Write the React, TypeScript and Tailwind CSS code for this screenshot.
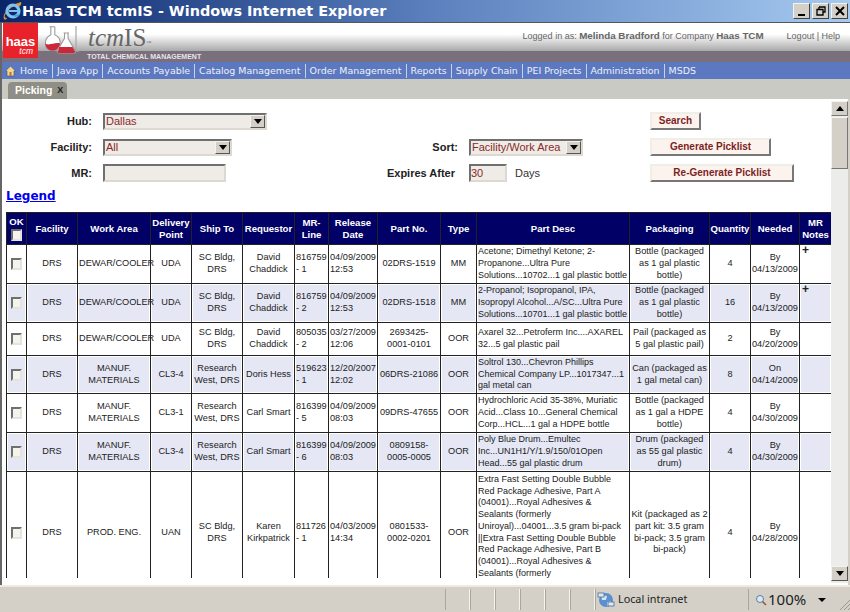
import React from "react";

const navItems = ["Home", "Java App", "Accounts Payable", "Catalog Management", "Order Management", "Reports", "Supply Chain", "PEI Projects", "Administration", "MSDS"];

type Row = { cols: string[]; h: string; plus?: boolean };

const rows: Row[] = [
  { h: "h-[39px]", plus: true, cols: ["DRS", "DEWAR/COOLER", "UDA", "SC Bldg, DRS", "David Chaddick", "816759 - 1", "04/09/2009 12:53", "02DRS-1519", "MM", "Acetone; Dimethyl Ketone; 2-Propanone...Ultra Pure Solutions...10702...1 gal plastic bottle", "Bottle (packaged as 1 gal plastic bottle)", "4", "By 04/13/2009"] },
  { h: "h-[39px]", plus: true, cols: ["DRS", "DEWAR/COOLER", "UDA", "SC Bldg, DRS", "David Chaddick", "816759 - 2", "04/09/2009 12:53", "02DRS-1518", "MM", "2-Propanol; Isopropanol, IPA, Isopropyl Alcohol...A/SC...Ultra Pure Solutions...10701...1 gal plastic bottle", "Bottle (packaged as 1 gal plastic bottle)", "16", "By 04/13/2009"] },
  { h: "h-[33px]", cols: ["DRS", "DEWAR/COOLER", "UDA", "SC Bldg, DRS", "David Chaddick", "805035 - 2", "03/27/2009 12:06", "2693425-0001-0101", "OOR", "Axarel 32...Petroferm Inc....AXAREL 32...5 gal plastic pail", "Pail (packaged as 5 gal plastic pail)", "2", "By 04/20/2009"] },
  { h: "h-[38px]", cols: ["DRS", "MANUF. MATERIALS", "CL3-4", "Research West, DRS", "Doris Hess", "519623 - 1", "12/20/2007 12:02", "06DRS-21086", "OOR", "Soltrol 130...Chevron Phillips Chemical Company LP...1017347...1 gal metal can", "Can (packaged as 1 gal metal can)", "8", "On 04/14/2009"] },
  { h: "h-[39px]", cols: ["DRS", "MANUF. MATERIALS", "CL3-1", "Research West, DRS", "Carl Smart", "816399 - 5", "04/09/2009 08:03", "09DRS-47655", "OOR", "Hydrochloric Acid 35-38%, Muriatic Acid...Class 10...General Chemical Corp...HCL...1 gal a HDPE bottle", "Bottle (packaged as 1 gal a HDPE bottle)", "4", "By 04/30/2009"] },
  { h: "h-[39px]", cols: ["DRS", "MANUF. MATERIALS", "CL3-4", "Research West, DRS", "Carl Smart", "816399 - 6", "04/09/2009 08:03", "0809158-0005-0005", "OOR", "Poly Blue Drum...Emultec Inc...UN1H1/Y/1.9/150/01Open Head...55 gal plastic drum", "Drum (packaged as 55 gal plastic drum)", "4", "By 04/30/2009"] },
  { h: "h-[122px]", cols: ["DRS", "PROD. ENG.", "UAN", "SC Bldg, DRS", "Karen Kirkpatrick", "811726 - 1", "04/03/2009 14:34", "0801533-0002-0201", "OOR", "Extra Fast Setting Double Bubble Red Package Adhesive, Part A (04001)...Royal Adhesives & Sealants (formerly Uniroyal)...04001...3.5 gram bi-pack ||Extra Fast Setting Double Bubble Red Package Adhesive, Part B (04001)...Royal Adhesives & Sealants (formerly Uniroyal)...04001...3.5 gram bi-pack", "Kit (packaged as 2 part kit: 3.5 gram bi-pack; 3.5 gram bi-pack)", "4", "By 04/28/2009"] },
];

const headers = ["Facility", "Work Area", "Delivery Point", "Ship To", "Requestor", "MR-Line", "Release Date", "Part No.", "Type", "Part Desc", "Packaging", "Quantity", "Needed", "MR Notes"];
const widths = ["w-[20px]", "w-[51px]", "w-[73px]", "w-[41px]", "w-[51px]", "w-[52px]", "w-[34px]", "w-[49px]", "w-[63px]", "w-[36px]", "w-[153px]", "w-[80px]", "w-[41px]", "w-[49px]", "w-[32px]"];
const leftCols = new Set([5, 6, 9]);

function Check() {
  return <input type="checkbox" readOnly className="appearance-none block mx-auto w-[11px] h-[12px] bg-[#f4f3ee] border-2 border-t-[#6f6f6f] border-l-[#6f6f6f] border-r-[#e4e3dc] border-b-[#e4e3dc]" />;
}

function Arrow() {
  return <span className="w-0 h-0 border-x-[4px] border-x-transparent border-t-[5px] border-t-black" />;
}

function SelectBox({ value, width }: { value: string; width: string }) {
  return (
    <div className={`${width} h-[17px] flex items-center justify-between bg-[#efebe6] border-2 border-t-[#6f6f6f] border-l-[#6f6f6f] border-r-[#ddd9d0] border-b-[#ddd9d0] text-[#8a2a2a] font-normal text-[11px] pl-[1px] leading-none whitespace-nowrap`}>
      <span>{value}</span>
      <span className="w-[15px] h-[13px] shrink-0 bg-[#d4d0c8] border border-t-[#f4f3ee] border-l-[#f4f3ee] border-r-[#555] border-b-[#555] flex items-center justify-center"><Arrow /></span>
    </div>
  );
}

function Btn({ label, width }: { label: string; width: string }) {
  return (
    <button className={`${width} h-[18px] bg-[#fcf3ee] border-2 border-t-[#efefe8] border-l-[#efefe8] border-r-[#777] border-b-[#777] text-[#7d1f1f] font-bold text-[10px] leading-none`}>
      {label}
    </button>
  );
}

function IeLogo() {
  return (
    <svg width="21" height="20" viewBox="0 0 21 20" className="shrink-0">
      <path d="M2 18 C0 14 6 4 19 1 C20 3 18 5 17 6 C13 3 6 8 3 14 C2 16 3 17 5 17 C4 19 3 19 2 18Z" fill="#d99a2b" />
      <circle cx="11" cy="10" r="6" fill="none" stroke="#7ec0ee" strokeWidth="3.2" />
      <rect x="7" y="9" width="9" height="2" fill="#7ec0ee" />
      <path d="M12 14 L18 13 L17 15 L13 16Z" fill="#4a9ad8" />
    </svg>
  );
}

function Flasks() {
  return (
    <svg width="42" height="30" viewBox="0 0 42 34" className="shrink-0">
      <path d="M8 2 L14 2 M9.5 2 L9.5 11 C1 15 1 28 11 29 C22 29 23 15 14 11 L14 2" fill="#fff" stroke="#9a9a9a" strokeWidth="1.2" />
      <path d="M3 21 C8 24 14 19 20 21 C19 27 15 29 11 29 C7 29 4 26 3 21Z" fill="#c8283a" />
      <path d="M24 9 L30 9 M25 9 L25 15 L17 29 C16 31 18 32 20 32 L35 32 C38 32 38 30 37 29 L29 15 L29 9" fill="#fff" stroke="#9a9a9a" strokeWidth="1.2" />
      <path d="M19 25 L34 25 L37 30 C37 31 36 32 35 32 L19 32 C17 32 17 30 18 29Z" fill="#c8283a" />
      <path d="M38 1 L38 29 L41 30" fill="none" stroke="#a8a8a8" strokeWidth="1.4" />
    </svg>
  );
}

function Globe() {
  return (
    <svg width="18" height="17" viewBox="0 0 18 17" className="shrink-0">
      <circle cx="9" cy="9" r="7" fill="#5b8fd0" />
      <path d="M4 4 L10 5 L9 9 L5 9Z M10 11 L14 10 L13 14 L10 15Z" fill="#d8e4f0" />
      <rect x="1" y="2" width="6" height="4" fill="#dfe7ef" stroke="#35618f" strokeWidth="0.7" />
      <rect x="11" y="11" width="6" height="4" fill="#dfe7ef" stroke="#35618f" strokeWidth="0.7" />
    </svg>
  );
}

export default function App() {
  return (
    <div className="w-[850px] h-[612px] overflow-hidden flex flex-col bg-[#d4d0c8] font-['Liberation_Sans',Arial,sans-serif]">
      {/* Title bar */}
      <div className="h-[22px] shrink-0 flex items-center bg-gradient-to-r from-[#0a246a] via-[#5a7fbc] to-[#a6caf0] pl-[2px] pr-[2px]">
        <IeLogo />
        <span className="ml-[-1px] text-white font-bold text-[14.4px] font-['DejaVu_Sans',sans-serif] whitespace-nowrap leading-none">Haas TCM tcmIS - Windows Internet Explorer</span>
        <div className="ml-auto flex gap-[2px]">
          {[
            <span key="a" className="block w-[7px] h-[2px] bg-black mt-[8px]" />,
            <svg key="b" width="10" height="10" viewBox="0 0 10 10"><path d="M3 1H9V6H7M3 1V3M1 3.5H7V9H1Z" fill="none" stroke="#000" strokeWidth="1.3" /></svg>,
            <svg key="c" width="10" height="10" viewBox="0 0 10 10"><path d="M1 1L9 9M9 1L1 9" stroke="#000" strokeWidth="2" /></svg>,
          ].map((ic, i) => (
            <span key={i} className="w-[17px] h-[16px] bg-[#d4d0c8] border border-t-[#f4f3ee] border-l-[#f4f3ee] border-r-[#404040] border-b-[#404040] flex items-center justify-center">{ic}</span>
          ))}
        </div>
      </div>

      <div className="flex-1 min-h-0 flex flex-col border-l-2 border-l-[#666] border-t border-t-[#555] bg-white">
        {/* Header */}
        <div className="h-[39px] shrink-0 flex flex-col">
          <div className="h-[28px] flex bg-gradient-to-b from-white from-40% to-[#a9a9a9]">
            <div className="flex-1 flex items-start">
              <div className="w-[35px] h-[35px] ml-[1px] bg-[#e8222a] flex flex-col items-center justify-end pb-[2px] text-white relative z-10">
                <span className="font-bold text-[13px] leading-[11px]">haas</span>
                <span className="italic text-[8.5px] leading-[9px] self-end pr-[5px]">tcm</span>
              </div>
              <div className="ml-[2px] mt-[2px] relative z-10"><Flasks /></div>
              <div className="ml-[6px] mt-[3px]">
                <span className="font-['Liberation_Serif',serif] text-[#666] text-[25px] leading-[24px] whitespace-nowrap"><i>tcm</i>IS<sup className="text-[5px]">™</sup></span>
              </div>
            </div>
            <div className="flex items-center h-[27px] pr-[10px] text-[#666] text-[9px] whitespace-nowrap">
              <span>Logged in as: <b className="text-[9.8px]">Melinda Bradford</b> for Company <b className="text-[9.8px]">Haas TCM</b></span>
              <span className="ml-[23px]">Logout | Help</span>
            </div>
          </div>
          <div className="h-[11px] bg-[#7a6f7d] pl-[85px] flex items-center">
            <span className="text-[#e8e4e8] text-[7px] font-bold leading-none whitespace-nowrap">TOTAL CHEMICAL MANAGEMENT</span>
          </div>
        </div>

        {/* Nav */}
        <nav className="h-[17px] shrink-0 bg-[#5b78c0] flex items-center pl-[3px] text-[#eef1f8] text-[9.45px] font-['DejaVu_Sans',sans-serif] whitespace-nowrap">
          <svg width="11" height="12" viewBox="0 0 11 12" className="shrink-0"><path d="M5.5 1L0.5 6H2V11H9V6H10.5Z" fill="#f2d58a" stroke="#33558f" strokeWidth="0.6" /><rect x="4.5" y="7" width="2" height="4" fill="#c46a3a" /></svg>
          {navItems.map((n, i) => (
            <span key={n} className={`px-[4px] h-[14px] leading-[14px] ${i < navItems.length - 1 ? "border-r border-r-[#c6d2ea]" : ""}`}>{n}</span>
          ))}
        </nav>

        {/* Tabs */}
        <div className="h-[20px] shrink-0 bg-[#c9cac3] flex items-end pl-[6px]">
          <div className="h-[17px] w-[59px] bg-[#8f8f85] rounded-t-[4px] flex items-center pl-[7px] gap-[5px] text-[10.5px] leading-none">
            <span className="text-white font-bold">Picking</span>
            <span className="text-[#1a1a1a] font-bold text-[9px]">X</span>
          </div>
        </div>

        {/* Main */}
        <div className="flex-1 min-h-0 flex bg-white">
          <div className="w-[829px] shrink-0 overflow-hidden flex flex-col h-[482px]">
            <div className="grid grid-cols-[90px_270px_74px_170px_auto] gap-x-[11px] grid-rows-[26px_26px_26px] pt-[9px] text-[11px] font-bold text-[#222] items-center shrink-0">
              <span className="text-right">Hub:</span>
              <SelectBox value="Dallas" width="w-[164px]" />
              <span />
              <span />
              <Btn label="Search" width="w-[51px]" />

              <span className="text-right">Facility:</span>
              <SelectBox value="All" width="w-[129px]" />
              <span className="text-right">Sort:</span>
              <SelectBox value="Facility/Work Area" width="w-[114px]" />
              <Btn label="Generate Picklist" width="w-[121px]" />

              <span className="text-right">MR:</span>
              <div className="w-[123px] h-[18px] bg-[#efebe6] border-2 border-t-[#6f6f6f] border-l-[#6f6f6f] border-r-[#ddd9d0] border-b-[#ddd9d0]" />
              <span className="whitespace-nowrap flex justify-end pr-[3px]">Expires After</span>
              <div className="flex items-center font-normal">
                <div className="w-[38px] h-[18px] bg-[#efebe6] border-2 border-t-[#6f6f6f] border-l-[#6f6f6f] border-r-[#ddd9d0] border-b-[#ddd9d0] text-[#8a2a2a] text-[11px] leading-[14px]">30</div>
                <span className="ml-[8px] text-[11px] text-[#333]">Days</span>
              </div>
              <Btn label="Re-Generate Picklist" width="w-[144px]" />
            </div>

            <div className="mt-[1px] ml-[4px] shrink-0 h-[18px] flex items-center">
              <a href="#" onClick={(e) => e.preventDefault()} className="text-[#0000ee] underline font-bold text-[12px] leading-[16px] font-['DejaVu_Sans',sans-serif]">Legend</a>
            </div>

            <div className="mt-[7px] ml-[4px] shrink-0 h-[366px] overflow-hidden">
              <table className="table-fixed border-collapse w-[825px] text-[9.2px] leading-[11.7px] text-[#222]">
                <colgroup>
                  {widths.map((w, i) => <col key={i} className={w} />)}
                </colgroup>
                <thead>
                  <tr className="h-[32px] bg-[#000066] text-white text-[9.6px]">
                    <th className="border border-[#222] p-0 font-bold align-middle">
                      <div className="flex flex-col items-center gap-[2px]"><span>OK</span><Check /></div>
                    </th>
                    {headers.map((h) => (
                      <th key={h} className="border border-[#222] p-0 font-bold align-middle">{h}</th>
                    ))}
                  </tr>
                </thead>
                <tbody>
                  {rows.map((r, i) => {
                    const altClass = i === 1 || i === 3 || i === 5 ? "bg-[#e5e7f5] shadow-[inset_0_0_0_1px_#fff]" : "bg-white";
                    return (
                      <tr key={i} className={r.h}>
                        <td className={`border border-[#222] p-0 align-middle ${altClass}`}><Check /></td>
                        {r.cols.map((c, j) => (
                          <td key={j} className={`border border-[#222] py-0 px-[1px] align-middle ${altClass} ${leftCols.has(j) ? "text-left" : "text-center"} ${j === 9 ? "text-[9px]" : ""}`}>{c}</td>
                        ))}
                        <td className={`border border-[#222] py-0 px-[2px] align-top text-left font-bold text-[12px] ${altClass}`}>{r.plus ? "+" : ""}</td>
                      </tr>
                    );
                  })}
                </tbody>
              </table>
            </div>
          </div>

          {/* Scrollbar */}
          <div className="w-[17px] shrink-0 h-[482px] mt-[2px] bg-[#ececea] flex flex-col">
            <span className="h-[15px] shrink-0 bg-[#d4d0c8] border border-t-[#f4f3ee] border-l-[#f4f3ee] border-r-[#777] border-b-[#777] flex items-center justify-center">
              <span className="w-0 h-0 border-x-[4px] border-x-transparent border-b-[5px] border-b-black" />
            </span>
            <span className="h-[52px] shrink-0 mt-[1px] bg-[#d4d0c8] border border-t-[#f4f3ee] border-l-[#f4f3ee] border-r-[#777] border-b-[#777]" />
            <span className="flex-1" />
            <span className="h-[15px] shrink-0 mb-[2px] bg-[#d4d0c8] border border-t-[#f4f3ee] border-l-[#f4f3ee] border-r-[#555] border-b-[#555] flex items-center justify-center"><Arrow /></span>
          </div>
          <div className="flex-1 bg-[#d4d0c8]" />
        </div>
      </div>

      {/* Status bar */}
      <div className="h-[27px] shrink-0 flex items-stretch border-t-2 border-t-[#eeeae2] bg-[#d4d0c8] text-[#222] py-[2px] text-[10.8px] font-['Noto_Sans',sans-serif]">
        <div className="flex-1" />
        {[0, 1, 2, 3, 4, 5].map((i) => (
          <div key={i} className="w-[25px] border-l border-l-[#a9a69c] border-r border-r-[#f4f3ee]" />
        ))}
        <div className="w-[153px] flex items-center gap-[3px] pl-[1px] border-l border-l-[#a9a69c] leading-none">
          <Globe />
          <span>Local intranet</span>
        </div>
        <div className="w-[102px] flex items-center border-l border-l-[#a9a69c] pl-[6px] leading-none">
          <svg width="12" height="12" viewBox="0 0 12 12" className="shrink-0"><circle cx="5" cy="5" r="3.5" fill="#dbe8f5" stroke="#5b7fa8" /><path d="M7.5 7.5L11 11" stroke="#a05a2a" strokeWidth="1.6" /></svg>
          <span className="text-[15px] ml-[1px]">100%</span>
          <span className="ml-[12px]"><span className="block w-0 h-0 border-x-[4px] border-x-transparent border-t-[4px] border-t-black" /></span>
          <svg width="11" height="11" viewBox="0 0 11 11" className="ml-auto self-end"><path d="M11 1L1 11M11 5L5 11M11 9L9 11" stroke="#9a978d" strokeWidth="1" /></svg>
        </div>
      </div>
    </div>
  );
}
